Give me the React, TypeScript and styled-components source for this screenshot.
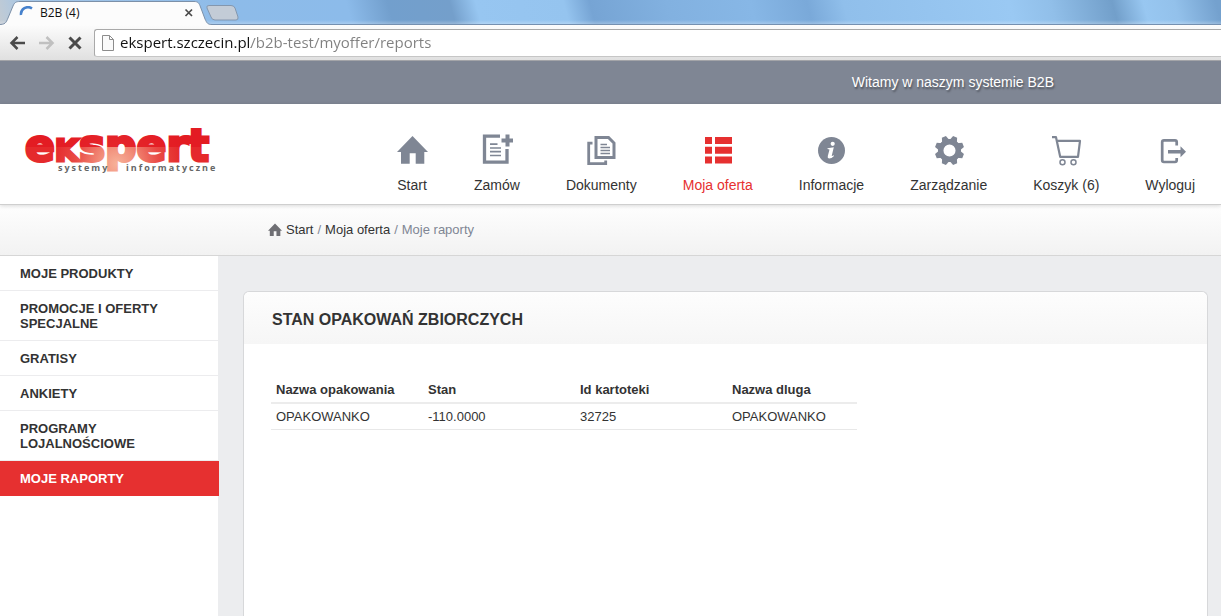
import React from 'react';
import styled, { createGlobalStyle } from 'styled-components';

const slate = '#7f8694';
const red = '#e63030';

const GlobalStyle = createGlobalStyle`
  * { box-sizing: border-box; }
  body {
    margin: 0;
    font-family: "Liberation Sans", Arial, sans-serif;
    font-size: 13px;
    color: #333;
    background: #ecedef;
  }
  a { color: inherit; text-decoration: none; }
`;

const Window = styled.div`
  display: flex;
  flex-direction: column;
  min-height: 100vh;
`;

/* Browser frame */

const TabStrip = styled.div`
  display: flex;
  align-items: flex-start;
  height: 25px;
  border-bottom: 1px solid #7590b0;
  background:
    linear-gradient(180deg, transparent 20px, rgba(255, 255, 255, 0.25) 24px),
    linear-gradient(75deg, #c3cbd3 0px, #a5c6e6 30px, #8dbbe9 230px, #8cbbea 340px, #729fcd 380px,
      #749fcb 440px, #97c6f1 465px, #95c4ef 550px, #76a4d4 575px, #82b1e0 650px, #87b7e6 730px,
      #7aa9d9 785px, #90bfeb 820px, #9ac9f3 980px, #91bfe9 1020px, #729fca 1080px, #98c7f1 1110px,
      #93c1eb 1140px, #74a1ce 1180px);
`;

const Tab = styled.div`
  position: relative;
  display: flex;
  align-items: center;
  width: 206px;
  height: 25px;
  padding: 1px 10px 0 19px;
  gap: 7px;
`;

const TabShape = styled.svg`
  position: absolute;
  left: 0;
  top: 0;
`;

const TabTitle = styled.span`
  position: relative;
  flex: 1;
  font: 12px/16px "Open Sans", sans-serif;
  color: #111;
`;

const Spinner = styled.svg`
  position: relative;
`;

const IconButton = styled.button`
  position: relative;
  display: flex;
  flex: none;
  padding: 0;
  border: 0;
  background: none;
`;

const NewTab = styled(IconButton)`
  margin-top: 5px;
`;

const Toolbar = styled.div`
  display: flex;
  align-items: center;
  height: 36px;
  padding-left: 9px;
  gap: 11px;
  border-bottom: 1px solid #a3a4a8;
  background: linear-gradient(#fcfcfc, #e0e0e0);
`;

const AddressBar = styled.label`
  display: flex;
  flex: 1;
  align-items: center;
  height: 28px;
  padding-left: 7px;
  gap: 6px;
  border: 1px solid #a9a9a9;
  border-right: 0;
  border-bottom-color: #c6c6c6;
  border-radius: 3px 0 0 3px;
  background: #fff;
`;

const AddressInput = styled.input`
  flex: 1;
  min-width: 0;
  height: 24px;
  padding: 0 0 2px;
  border: 0;
  outline: 0;
  font: 15px/22px "Open Sans", sans-serif;
  color: transparent;
  background: linear-gradient(90deg, #111 131px, #808080 131px);
  background-clip: text;
  -webkit-background-clip: text;
`;

/* Page */

const Welcome = styled.div`
  display: flex;
  justify-content: flex-end;
  align-items: center;
  height: 43px;
  padding: 0 167px 2px 0;
  background: ${slate};
  color: #fff;
  font-size: 14px;
  line-height: 18px;
  text-shadow: 1px 2px 2px rgba(0, 0, 0, 0.4);
`;

const Header = styled.header`
  position: relative;
  display: flex;
  justify-content: space-between;
  height: 101px;
  padding: 14px 26px 0 20px;
  border-bottom: 1px solid #cfcfcf;
  box-shadow: 0 1px 4px rgba(0, 0, 0, 0.15);
  background: #fff;
`;

const Nav = styled.nav`
  display: flex;
  gap: 46px;
  padding-top: 16px;
`;

const NavLink = styled.a<{ $active?: boolean }>`
  display: flex;
  flex-direction: column;
  align-items: center;
  gap: 10px;
  height: 60px;
  color: ${(p) => (p.$active ? red : '#333')};
  font-size: 14px;
  line-height: 18px;
  white-space: nowrap;
  svg { color: ${(p) => (p.$active ? red : slate)}; }
`;

const Crumbs = styled.nav`
  display: flex;
  align-items: center;
  height: 51px;
  padding-left: 268px;
  gap: 4px;
  border-bottom: 1px solid #d6d6d6;
  background: linear-gradient(#fefefe, #f2f2f2);
  color: ${slate};
  line-height: 16px;
  a { color: #333; }
`;

const Body = styled.div`
  display: flex;
  flex: 1;
`;

const Sidebar = styled.nav`
  width: 218px;
  flex: none;
  background: #fff;
`;

const SideLink = styled.a<{ $active?: boolean }>`
  display: block;
  width: ${(p) => (p.$active ? '219px' : 'auto')};
  padding: 10px 40px 9px 20px;
  border-bottom: 1px solid ${(p) => (p.$active ? red : '#ececee')};
  background: ${(p) => (p.$active ? red : 'transparent')};
  color: ${(p) => (p.$active ? '#fff' : '#333')};
  font-weight: bold;
  line-height: 15px;
`;

const Main = styled.main`
  display: flex;
  flex: 1;
  padding: 35px 13px 0 25px;
`;

const Panel = styled.section`
  flex: 1;
  border: 1px solid #d7d8da;
  border-bottom: 0;
  border-radius: 6px 6px 0 0;
  background: #fff;
`;

const PanelTitle = styled.h1`
  margin: 0;
  padding: 18px 28px 14px;
  border-radius: 6px 6px 0 0;
  background: linear-gradient(#fdfdfd, #f6f6f6);
  font-size: 16px;
  line-height: 20px;
`;

const Table = styled.table`
  width: 586px;
  margin: 32px 27px;
  border-collapse: separate;
  border-spacing: 0;
  table-layout: fixed;
  line-height: 16px;
`;

const HeadCell = styled.th`
  width: 152px;
  padding: 6px 5px 4px;
  border-bottom: 2px solid #ececec;
  text-align: left;
  &:last-child { width: auto; }
`;

const Cell = styled.td`
  padding: 5px 5px 4px;
  border-bottom: 1px solid #e8e8e8;
`;

const Icon = ({ children }: { children: React.ReactNode }) => (
  <svg width="32" height="32" viewBox="0 0 32 32" fill="none" stroke="none" aria-hidden="true">
    {children}
  </svg>
);

const HomeShape = () => (
  <path fill="currentColor" d="M16.500 2 32 18H28.300V29.700H19.700V19.300H13.700V29.700H5V18H1Z" />
);

const icons = {
  home: <Icon><HomeShape /></Icon>,
  order: (
    <Icon>
      <path stroke="currentColor" strokeWidth="3.300" d="M19 2.200H3.500V28.200H26V15" />
      <path stroke="currentColor" strokeWidth="1.700" d="M9 10.200H16.500M9 14H20M9 17.700H20M9 21.500H20" />
      <path stroke="currentColor" strokeWidth="4" d="M20.500 6.500H32.500M26.500 .5V12.500" />
    </Icon>
  ),
  documents: (
    <Icon>
      <path stroke="currentColor" strokeWidth="3" d="M11 3.500H23.500L29 9V23.500H11Z" />
      <path stroke="currentColor" strokeWidth="2.800" d="M7.500 9.200H3.700V29.700H20.700V26.500" />
      <path stroke="currentColor" strokeWidth="1.300" d="M15.500 10.500H22M15.500 13.500H25M15.500 16.500H25M15.500 19.500H25" />
    </Icon>
  ),
  list: (
    <Icon>
      <path fill="currentColor" d="M3 3h7v7H3zM13 3h17v7H13zM3 12.700h7v7H3zM13 12.700h17v7H13zM3 22.500h7v7H3zM13 22.500h17v7H13z" />
    </Icon>
  ),
  info: (
    <Icon>
      <circle cx="16.500" cy="16.500" r="13.500" fill="currentColor" />
      <circle cx="17.700" cy="9.800" r="2.100" fill="#fff" />
      <path fill="#fff" d="M12.500 14.200 18.800 13.300 16.800 21.500Q16.600 22.700 18.600 21.300L19 22Q16.500 24.600 14 24.500 12.200 24.200 12.800 22L14.500 15.500 12.500 15Z" />
    </Icon>
  ),
  gear: (
    <Icon>
      <circle cx="16.500" cy="16.500" r="8.800" stroke="currentColor" strokeWidth="5.500" />
      {[22.5, 67.5, 112.5, 157.5, 202.5, 247.5, 292.5, 337.5].map((angle) => (
        <path key={angle} fill="currentColor" transform={`rotate(${angle} 16.500 16.500)`} d="M12.500 7 14.300 1.800H18.700L20.500 7Z" />
      ))}
    </Icon>
  ),
  cart: (
    <Icon>
      <path stroke="currentColor" strokeWidth="2.200" strokeLinejoin="round" d="M2 3.200H6L10.200 22.800H28L30 6.800H7" />
      <circle cx="12.500" cy="28.300" r="2.500" stroke="currentColor" strokeWidth="1.500" />
      <circle cx="23.500" cy="28.300" r="2.500" stroke="currentColor" strokeWidth="1.500" />
    </Icon>
  ),
  logout: (
    <Icon>
      <path stroke="currentColor" strokeWidth="2.700" d="M22.700 11.500V8Q22.700 6.400 21 6.400H10Q8.200 6.400 8.200 8V26.300Q8.200 28 10 28H21Q22.700 28 22.700 26.300V24" />
      <path fill="currentColor" d="M14 16H26.500V12.200L32 17.700 26.500 23.200V19.500H14Z" />
    </Icon>
  ),
};

const navItems: { label: string; icon: keyof typeof icons; active?: boolean }[] = [
  { label: 'Start', icon: 'home' },
  { label: 'Zamów', icon: 'order' },
  { label: 'Dokumenty', icon: 'documents' },
  { label: 'Moja oferta', icon: 'list', active: true },
  { label: 'Informacje', icon: 'info' },
  { label: 'Zarządzanie', icon: 'gear' },
  { label: 'Koszyk (6)', icon: 'cart' },
  { label: 'Wyloguj', icon: 'logout' },
];

const sideItems = [
  'MOJE PRODUKTY',
  'PROMOCJE I OFERTY SPECJALNE',
  'GRATISY',
  'ANKIETY',
  'PROGRAMY LOJALNOŚCIOWE',
  'MOJE RAPORTY',
];

const columns = ['Nazwa opakowania', 'Stan', 'Id kartoteki', 'Nazwa dluga'];
const rows = [['OPAKOWANKO', '-110.0000', '32725', 'OPAKOWANKO']];

const Logo = () => (
  <svg width="210" height="64" viewBox="0 0 210 64" role="img" aria-label="ekspert systemy informatyczne">
    <defs>
      <radialGradient id="glow" gradientUnits="userSpaceOnUse" cx="97" cy="46" r="64">
        <stop offset="0" stopColor="#f7b29a" />
        <stop offset="0.250" stopColor="#f2917c" />
        <stop offset="0.650" stopColor="#e94a45" />
        <stop offset="1" stopColor="#e52a2c" />
      </radialGradient>
      <pattern id="gloss" patternUnits="userSpaceOnUse" width="210" height="64">
        <rect width="210" height="64" fill="url(#glow)" />
        <rect width="210" height="29" fill="#e41b22" fillOpacity="0.900" />
      </pattern>
    </defs>
    <text x="5" y="43" fill="url(#gloss)" stroke="url(#gloss)" strokeWidth="3" fontFamily="DejaVu Sans, sans-serif" fontWeight="700" fontSize="44">
      e<tspan style={{ fontVariantCaps: 'small-caps' }}>k</tspan>spert
    </text>
    <g fontFamily="Open Sans, sans-serif" fontWeight="700" fontSize="9" fill="#666" letterSpacing="2">
      <text x="38" y="53">systemy</text>
      <text x="106" y="53">informatyczne</text>
    </g>
  </svg>
);

export default function App() {
  return (
    <Window>
      <GlobalStyle />
      <TabStrip>
        <Tab>
          <TabShape width="212" height="25" viewBox="0 0 212 25" aria-hidden="true">
            <path
              d="M-1 24.500C5 24.500 6 23 8 18L13 6C14.500 2.500 16 1.500 20 1.500H194C198 1.500 199 3 200.500 7L205 19C207 23.500 208 24.500 212 24.500V26H-1Z"
              fill="#fcfcfc"
              stroke="#7c90a8"
            />
          </TabShape>
          <Spinner width="14" height="14" viewBox="0 0 14 14" fill="none" aria-hidden="true">
            <path d="M2 9A7 7 0 0 1 13 2.500" stroke="#4681cc" strokeWidth="2.500" />
          </Spinner>
          <TabTitle>B2B (4)</TabTitle>
          <IconButton aria-label="Zamknij kartę">
            <svg width="14" height="14" viewBox="0 0 14 14">
              <path d="M3.500 3.500 10 10M10 3.500 3.500 10" stroke="#4a4a4a" strokeWidth="1.700" />
            </svg>
          </IconButton>
        </Tab>
        <NewTab aria-label="Nowa karta">
          <svg width="33" height="16" viewBox="0 0 33 16">
            <path d="M3 .5H25Q28 .5 29 3L32 12Q32.500 15 30 15H9Q6 15 5 12L1 3Q0 .5 3 .5Z" fill="#c3ccd7" stroke="#8497ae" />
          </svg>
        </NewTab>
      </TabStrip>
      <Toolbar>
        <IconButton aria-label="Wstecz">
          <svg width="18" height="18" viewBox="0 0 18 18" fill="none" stroke="#4b4b4b" strokeWidth="2.500">
            <path d="M16 9H2.500M8.500 3 2.500 9 8.500 15" />
          </svg>
        </IconButton>
        <IconButton aria-label="Dalej">
          <svg width="18" height="18" viewBox="0 0 18 18" fill="none" stroke="#c0c0c0" strokeWidth="2.500">
            <path d="M1 9H14.500M8.500 3 14.500 9 8.500 15" />
          </svg>
        </IconButton>
        <IconButton aria-label="Zatrzymaj">
          <svg width="16" height="18" viewBox="0 0 16 18" fill="none" stroke="#4b4b4b" strokeWidth="3">
            <path d="M2.500 3.500 13.500 14.500M13.500 3.500 2.500 14.500" />
          </svg>
        </IconButton>
        <AddressBar>
          <svg width="12" height="16" viewBox="0 0 12 16" fill="#fafafa" stroke="#8c8c8c" aria-hidden="true">
            <path d="M.5 .5H7.500L11.500 4.500V15.500H.5ZM7.500 .5V4.500H11.500" />
          </svg>
          <AddressInput aria-label="Adres" defaultValue="ekspert.szczecin.pl/b2b-test/myoffer/reports" />
        </AddressBar>
      </Toolbar>
      <Welcome>Witamy w naszym systemie B2B</Welcome>
      <Header>
        <a href="#start"><Logo /></a>
        <Nav>
          {navItems.map((item) => (
            <NavLink key={item.label} href={`#${item.icon}`} $active={item.active}>
              {icons[item.icon]}
              {item.label}
            </NavLink>
          ))}
        </Nav>
      </Header>
      <Crumbs>
        <svg width="14" height="14" viewBox="1 1 31 31" color="#6f6f74" aria-hidden="true"><HomeShape /></svg>
        <a href="#start">Start</a>
        <span>/</span>
        <a href="#list">Moja oferta</a>
        <span>/</span>
        <span>Moje raporty</span>
      </Crumbs>
      <Body>
        <Sidebar>
          {sideItems.map((label) => (
            <SideLink key={label} href="#list" $active={label === 'MOJE RAPORTY'}>{label}</SideLink>
          ))}
        </Sidebar>
        <Main>
          <Panel>
            <PanelTitle>STAN OPAKOWAŃ ZBIORCZYCH</PanelTitle>
            <Table>
              <thead>
                <tr>{columns.map((name) => <HeadCell key={name} scope="col">{name}</HeadCell>)}</tr>
              </thead>
              <tbody>
                {rows.map((row) => (
                  <tr key={row[2]}>{row.map((value, i) => <Cell key={columns[i]}>{value}</Cell>)}</tr>
                ))}
              </tbody>
            </Table>
          </Panel>
        </Main>
      </Body>
    </Window>
  );
}
